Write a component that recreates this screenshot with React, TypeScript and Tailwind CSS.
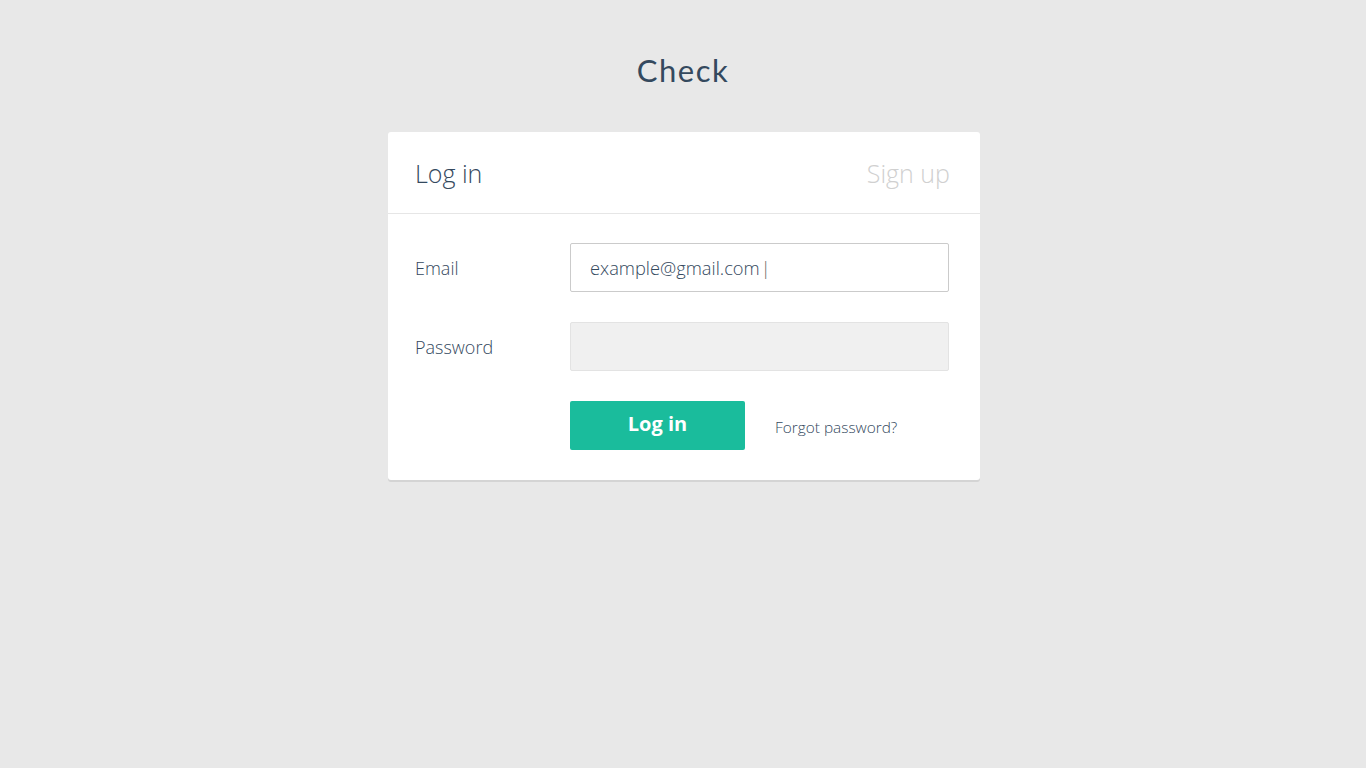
export default function App() {
    return (
        <div className="min-h-[768px] w-full bg-[#e8e8e8] flex flex-col items-center font-['Open_Sans',sans-serif] text-[#34495e]">
            <h1 className="mt-[49px] h-[42px] text-[31px] leading-[42px] tracking-[1.5px] font-['Lato',sans-serif] font-normal text-[#34495e]">
                Check
            </h1>

            <div className="mt-[41px] ml-[2px] w-[592px] bg-white rounded-[3px] shadow-[0_2px_0_#d4d4d4]">
                <div className="h-[82px] flex items-center justify-between pt-[3px] pl-[27px] pr-[30px] border-b border-[#e6e6e6]">
                    <span className="text-[25px] font-light">Log in</span>
                    <span className="text-[25px] font-light text-[#d0d0d0]">Sign up</span>
                </div>

                <div className="px-[27px] pt-[29px] pb-[30px] pr-[31px] flex flex-col gap-[30px]">
                    <div className="flex items-center">
                        <label className="w-[155px] text-[18px] font-light pt-[2px]">Email</label>
                        <div className="flex-1 h-[49px] flex items-center pl-[19px] border border-[#cbcbcb] rounded-[2px] text-[18.3px] font-light">
                            example@gmail.com<span className="ml-[1px] font-light text-[#666]">|</span>
                        </div>
                    </div>

                    <div className="flex items-center">
                        <label className="w-[155px] text-[18px] font-light pt-[2px]">Password</label>
                        <div className="flex-1 h-[49px] bg-[#f0f0f0] border border-[#e3e3e3] rounded-[2px]" />
                    </div>

                    <div className="flex items-center pl-[155px]">
                        <button className="w-[175px] h-[49px] pb-[3px] bg-[#1abc9c] text-white text-[20px] font-bold rounded-[2px]">
                            Log in
                        </button>
                        <a className="ml-[30px] mt-[4px] text-[15.4px] font-light text-[#34495e]">Forgot password?</a>
                    </div>
                </div>
            </div>
        </div>
    )
}
